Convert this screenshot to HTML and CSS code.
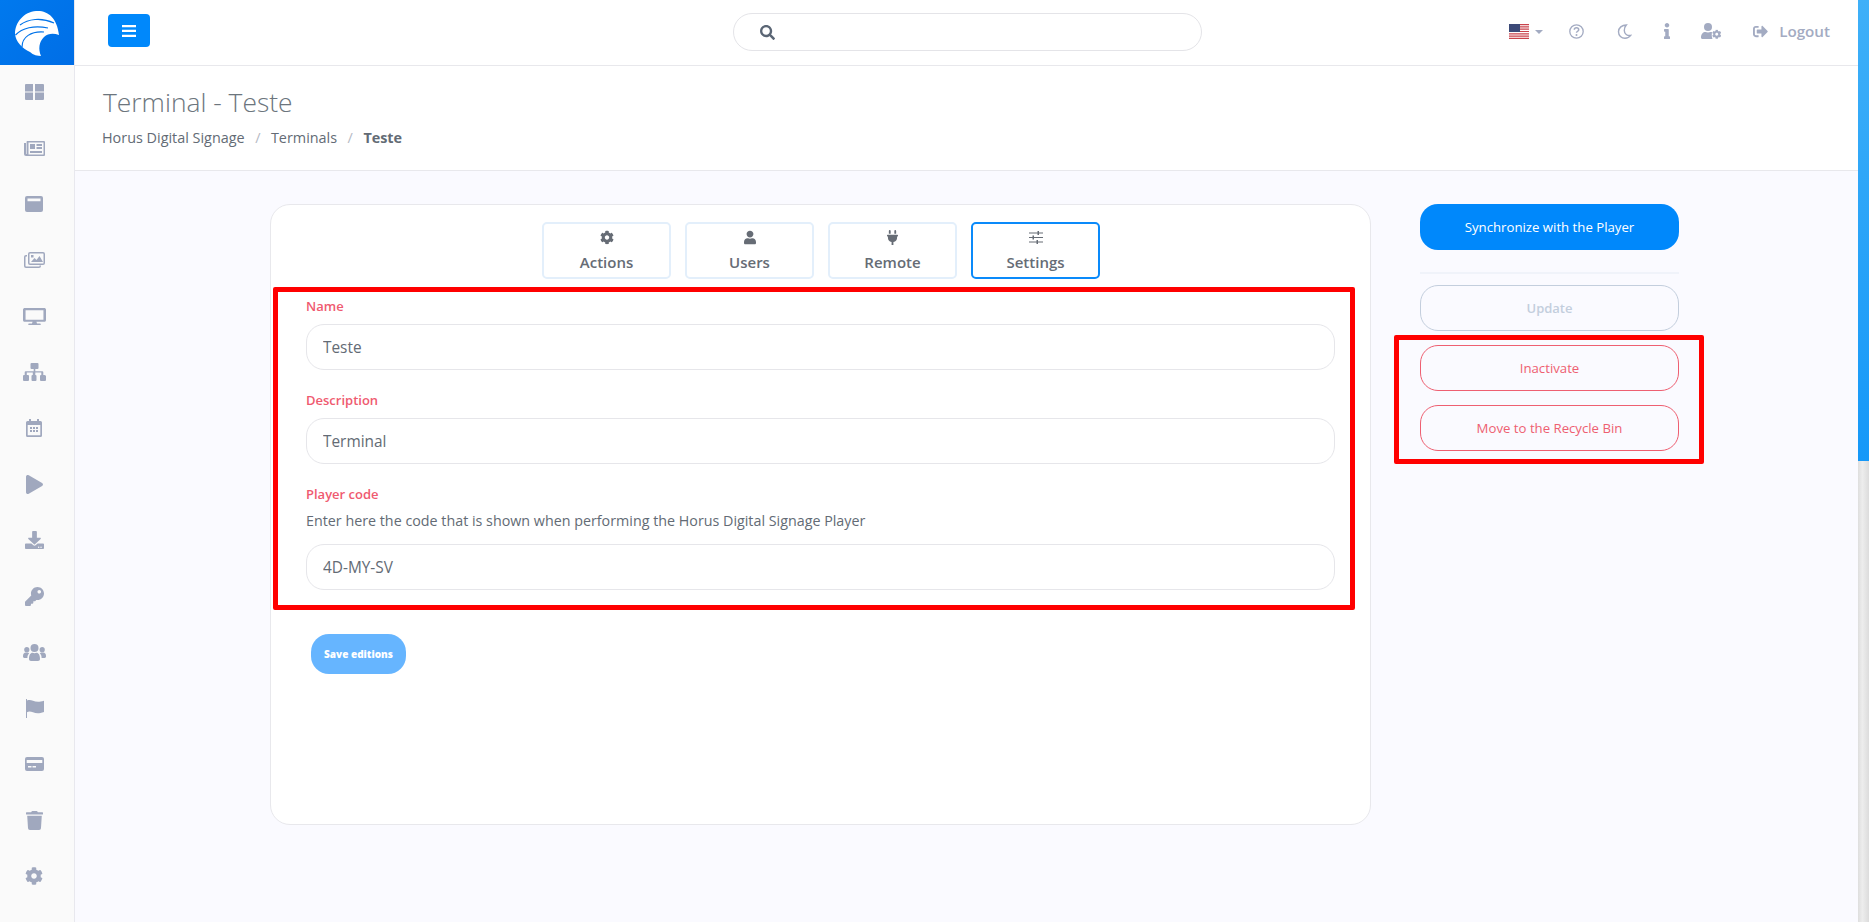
FILE: index.html
```html
<!DOCTYPE html>
<html lang="en">
<head>
    <meta charset="UTF-8">
    <meta name="viewport" content="width=device-width, initial-scale=1.0">
    <title>Terminal - Teste</title>
    <link rel="stylesheet" href="styles.css">
</head>
<body>
    <svg class="defs" width="0" height="0">
        <symbol id="cog" viewBox="0 0 512 512"><path d="M487.4 315.7l-42.6-24.6c4.3-23.2 4.3-47 0-70.2l42.6-24.6c4.9-2.8 7.1-8.6 5.5-14-11.1-35.6-30-67.8-54.7-94.6-3.8-4.1-10-5.1-14.8-2.3L380.8 110c-17.9-15.4-38.5-27.3-60.8-35.1V25.8c0-5.6-3.9-10.5-9.4-11.7-36.7-8.2-74.3-7.8-109.2 0-5.5 1.2-9.4 6.1-9.4 11.7V75c-22.2 7.9-42.8 19.8-60.8 35.1L88.7 85.5c-4.9-2.8-11-1.9-14.8 2.3-24.7 26.7-43.6 58.9-54.7 94.6-1.7 5.4.6 11.2 5.5 14L67.3 221c-4.3 23.2-4.3 47 0 70.2l-42.6 24.6c-4.9 2.8-7.1 8.6-5.5 14 11.1 35.6 30 67.8 54.7 94.6 3.8 4.1 10 5.1 14.8 2.3l42.6-24.6c17.9 15.4 38.5 27.3 60.8 35.1v49.2c0 5.6 3.9 10.5 9.4 11.7 36.7 8.2 74.3 7.8 109.2 0 5.5-1.2 9.4-6.1 9.4-11.7v-49.2c22.2-7.9 42.8-19.8 60.8-35.1l42.6 24.6c4.9 2.8 11 1.9 14.8-2.3 24.7-26.7 43.6-58.9 54.7-94.6 1.5-5.5-.7-11.3-5.6-14.1zM256 336c-44.1 0-80-35.9-80-80s35.9-80 80-80 80 35.9 80 80-35.9 80-80 80z"/></symbol>
        <symbol id="user" viewBox="0 0 448 512"><path d="M224 256c70.7 0 128-57.3 128-128S294.7 0 224 0 96 57.3 96 128s57.3 128 128 128zm89.6 32h-16.7c-22.2 10.2-46.9 16-72.9 16s-50.6-5.8-72.9-16h-16.7C60.2 288 0 348.2 0 422.4V464c0 26.5 21.5 48 48 48h352c26.5 0 48-21.5 48-48v-41.6c0-74.2-60.2-134.4-134.4-134.4z"/></symbol>
    </svg>

    <aside class="sidebar">
        <div class="logo">
            <svg width="46" height="46" viewBox="0 0 46 46">
                <path fill="#fff" d="M1 24C1 12 10 2 22 1c11-1 21 6 23 24-5-2-11-2-15 2-5 5-6 12-3 19-3 0-8-1-11-4C8 38 2 32 1 24z"/>
                <path fill="none" stroke="#0073e9" stroke-width="1.2" d="M6 15C14 9 27 7 40 13M1.500 25C8 18 20 15 34 18M8 37C8 27 17 21 30 22"/>
            </svg>
        </div>
        <nav class="side-nav">
            <a class="side-item"><svg width="19" height="16" viewBox="0 0 19 16"><path d="M0 1a1 1 0 0 1 1-1h7v7.400H0zM10 0h8a1 1 0 0 1 1 1v6.400h-9zM0 8.600h8V16H1a1 1 0 0 1-1-1zM10 8.600h9V15a1 1 0 0 1-1 1h-8z"/></svg></a>
            <a class="side-item"><svg width="21" height="15" viewBox="0 0 21 15"><path fill-rule="evenodd" d="M3 0h17a1 1 0 0 1 1 1v13a1 1 0 0 1-1 1H2a2 2 0 0 1-2-2V2h2v11h.6V1a1 1 0 0 1 .4-1zm1.500 1.500v12h15v-12z"/><path d="M6 3h5v5H6zM12.500 3H18v2h-5.500zM12.500 6H18v2h-5.500zM6 10h12v2H6z"/></svg></a>
            <a class="side-item"><svg width="18" height="16" viewBox="0 0 18 16"><path fill-rule="evenodd" d="M2 0h14a2 2 0 0 1 2 2v12a2 2 0 0 1-2 2H2a2 2 0 0 1-2-2V2a2 2 0 0 1 2-2zm.5 2.500v2.800h13V2.500z"/></svg></a>
            <a class="side-item"><svg width="21" height="16" viewBox="0 0 21 16"><path fill-rule="evenodd" d="M6 0h13a2 2 0 0 1 2 2v9a2 2 0 0 1-2 2H6a2 2 0 0 1-2-2V2a2 2 0 0 1 2-2zm0 1.500a.5.5 0 0 0-.5.5v9a.5.5 0 0 0 .5.5h13a.5.5 0 0 0 .5-.5V2a.5.5 0 0 0-.5-.5z"/><path d="M7 10l3.500-4 2 2 3-4L19 10zM7 3h2.500v2.500H7zM0 5a2 2 0 0 1 2-2h1v1.500H2a.5.5 0 0 0-.5.5v9c0 .3.2.5.5.5h13a.5.5 0 0 0 .5-.5v-.5H17v.5a2 2 0 0 1-2 2H2a2 2 0 0 1-2-2z"/></svg></a>
            <a class="side-item"><svg width="23" height="17" viewBox="0 0 576 512" preserveAspectRatio="none"><path d="M528 0H48C21.500 0 0 21.500 0 48v320c0 26.500 21.500 48 48 48h192l-16 48h-72c-13.300 0-24 10.700-24 24s10.700 24 24 24h272c13.300 0 24-10.700 24-24s-10.700-24-24-24h-72l-16-48h192c26.500 0 48-21.500 48-48V48c0-26.500-21.500-48-48-48zm-16 352H64V64h448v288z"/></svg></a>
            <a class="side-item"><svg width="23" height="18" viewBox="0 0 23 18"><path d="M8.500 0h6a1 1 0 0 1 1 1v4a1 1 0 0 1-1 1h-2.200v2.200h7a1 1 0 0 1 1 1V12h.7a2 2 0 0 1 2 1v4a1 1 0 0 1-1 1H18a1 1 0 0 1-1-1v-4a1 1 0 0 1 1-1h.3V9.600h-6V12h.2a1 1 0 0 1 1 1v4a1 1 0 0 1-1 1h-3a1 1 0 0 1-1-1v-4a1 1 0 0 1 1-1h.3V9.600h-6V12H5a1 1 0 0 1 1 1v4a1 1 0 0 1-1 1H1a1 1 0 0 1-1-1v-4a1 1 0 0 1 1-1h.7V9.200a1 1 0 0 1 1-1h8V6H8.500a1 1 0 0 1-1-1V1a1 1 0 0 1 1-1z"/></svg></a>
            <a class="side-item"><svg width="16" height="18" viewBox="0 0 16 18"><path fill-rule="evenodd" d="M3 0h2v2h6V0h2v2h1.500A1.500 1.500 0 0 1 16 3.500v13a1.500 1.500 0 0 1-1.500 1.500h-13A1.500 1.500 0 0 1 0 16.500v-13A1.500 1.500 0 0 1 1.500 2H3zM1.700 6v10a.3.3 0 0 0 .3.3h12a.3.3 0 0 0 .3-.3V6z"/><path d="M4 8h2v2H4zM7 8h2v2H7zM10 8h2v2h-2zM4 11h2v2H4zM7 11h2v2H7zM10 11h2v2h-2z"/></svg></a>
            <a class="side-item"><svg width="17" height="19" viewBox="0 0 448 512" preserveAspectRatio="none"><path d="M424.400 214.700L72.400 6.600C43.800-10.300 0 6.100 0 47.900V464c0 37.500 40.700 60.100 72.400 41.300l352-208c31.400-18.500 31.500-64.100 0-82.600z"/></svg></a>
            <a class="side-item"><svg width="19" height="18" viewBox="0 0 512 512" preserveAspectRatio="none"><path d="M216 0h80c13.300 0 24 10.700 24 24v168h87.700c17.800 0 26.700 21.500 14.100 34.100L269.700 378.300c-7.500 7.500-19.800 7.500-27.300 0L90.100 226.100c-12.600-12.600-3.700-34.100 14.100-34.100H192V24c0-13.300 10.700-24 24-24zm296 376v112c0 13.300-10.700 24-24 24H24c-13.300 0-24-10.700-24-24V376c0-13.300 10.700-24 24-24h146.700l49 49c20.100 20.100 52.500 20.100 72.600 0l49-49H488c13.300 0 24 10.700 24 24zm-124 88c0-11-9-20-20-20s-20 9-20 20 9 20 20 20 20-9 20-20zm64 0c0-11-9-20-20-20s-20 9-20 20 9 20 20 20 20-9 20-20z"/></svg></a>
            <a class="side-item"><svg width="19" height="19" viewBox="0 0 512 512"><path d="M512 176.001C512 273.203 433.202 352 336 352c-11.220 0-22.190-1.062-32.827-3.069l-24.012 27.014A23.999 23.999 0 0 1 261.223 384H224v40c0 13.255-10.745 24-24 24h-40v40c0 13.255-10.745 24-24 24H24c-13.255 0-24-10.745-24-24v-78.059c0-6.365 2.529-12.470 7.029-16.971l161.802-161.802C163.108 213.814 160 195.271 160 176 160 78.798 238.797.001 335.999 0 433.488-.001 512 78.511 512 176.001zM336 128c0 26.510 21.490 48 48 48s48-21.490 48-48-21.490-48-48-48-48 21.490-48 48z"/></svg></a>
            <a class="side-item"><svg width="23" height="17" viewBox="0 0 23 17"><circle cx="11.500" cy="4" r="4"/><path d="M6 15c0-4 1.500-6.200 3.500-6.200 1.300.6 2.700.6 4 0 2 0 3.500 2.200 3.500 6.200 0 1.200-.8 2-2 2H8c-1.200 0-2-.8-2-2z"/><circle cx="3.800" cy="5.700" r="2.600"/><circle cx="19.200" cy="5.700" r="2.600"/><path d="M0 12c0-2 1-3.500 3-3.500h1.500c.6 0 1.200.3 1.700.7C5 10.200 4.400 12 4.400 14H1.300C.5 14 0 13.400 0 12.600zM23 12c0-2-1-3.500-3-3.500h-1.500c-.6 0-1.200.3-1.700.7 1.200 1 1.800 2.800 1.800 4.800h3.100c.8 0 1.300-.6 1.300-1.400z"/></svg></a>
            <a class="side-item"><svg width="19" height="19" viewBox="0 0 19 19"><path d="M1 0h1v1.500C4 .8 6 1 8 1.800c3 1.200 6 1.500 11 0V13c-5 1.700-8 1.400-11 .3-2.500-.9-4.500-1-6 0V19H1z"/></svg></a>
            <a class="side-item"><svg width="19" height="14" viewBox="0 0 19 14"><path fill-rule="evenodd" d="M2 0h15a2 2 0 0 1 2 2v10a2 2 0 0 1-2 2H2a2 2 0 0 1-2-2V2a2 2 0 0 1 2-2zm-.3 3v3h15.600V3zM3 9v1.500h3.500V9zm4.500 0v1.500h3.500V9z"/></svg></a>
            <a class="side-item"><svg width="17" height="19" viewBox="0 0 448 512" preserveAspectRatio="none"><path d="M432 32H312l-9.400-18.700A24 24 0 0 0 281.100 0H166.800a23.720 23.720 0 0 0-21.400 13.300L136 32H16A16 16 0 0 0 0 48v32a16 16 0 0 0 16 16h416a16 16 0 0 0 16-16V48a16 16 0 0 0-16-16zM53.200 467a48 48 0 0 0 47.900 45h245.800a48 48 0 0 0 47.900-45L416 128H32z"/></svg></a>
            <a class="side-item"><svg width="18" height="18"><use href="#cog"/></svg></a>
        </nav>
    </aside>

    <div class="main">
        <header class="topbar">
            <button class="menu-btn">
                <svg width="14" height="12" viewBox="0 0 14 12"><path fill="#fff" d="M0 0h14v2.300H0zM0 4.800h14v2.300H0zM0 9.700h14V12H0z"/></svg>
            </button>
            <div class="search">
                <svg width="15" height="15" viewBox="0 0 512 512"><path fill="#5b6675" d="M505 442.700L405.300 343c-4.500-4.500-10.600-7-17-7H372c27.600-35.300 44-79.700 44-128C416 93.100 322.900 0 208 0S0 93.100 0 208s93.100 208 208 208c48.300 0 92.700-16.400 128-44v16.300c0 6.400 2.500 12.500 7 17l99.700 99.700c9.400 9.400 24.600 9.400 33.900 0l28.300-28.300c9.400-9.400 9.400-24.600.1-34zM208 336c-70.700 0-128-57.200-128-128 0-70.700 57.200-128 128-128 70.700 0 128 57.200 128 128 0 70.700-57.200 128-128 128z"/></svg>
            </div>
            <div class="top-actions">
                <svg class="flag" width="20" height="15" viewBox="0 0 20 15">
                    <rect width="20" height="15" fill="#fff"/>
                    <path fill="#c9434c" d="M0 0h20v1.200H0zM0 2.300h20v1.200H0zM0 4.600h20v1.200H0zM0 6.900h20v1.200H0zM0 9.200h20v1.200H0zM0 11.500h20v1.200H0zM0 13.800h20V15H0z"/>
                    <rect width="11" height="8" fill="#3c4a78"/>
                </svg>
                <span class="caret"></span>
                <svg class="help" width="15" height="15" viewBox="0 0 15 15"><circle cx="7.500" cy="7.500" r="6.700" fill="none" stroke="#a3abc2" stroke-width="1.300"/><path fill="none" stroke="#a3abc2" stroke-width="1.500" d="M5.300 5.800c0-1.300 1-2 2.200-2s2.200.7 2.200 1.900c0 1.600-2.200 1.500-2.200 3.100"/><circle cx="7.500" cy="10.900" r="1" fill="#a3abc2"/></svg>
                <svg class="moon" width="15" height="15" viewBox="0 0 15 15"><path fill="none" stroke="#a3abc2" stroke-width="1.400" d="M9.300 1C5 1 1.500 3.800 1.500 7.700s3 6.500 6.500 6.500c2.400 0 4.400-1 5.700-2.800-3.500.6-6.400-1.500-6.400-4.800 0-2.300.8-4.300 2-5.600z"/></svg>
                <svg class="info" width="6" height="16" viewBox="0 0 192 512" preserveAspectRatio="none"><path fill="#a3abc2" d="M20 424.229h20V279.771H20c-11.046 0-20-8.954-20-20V212c0-11.046 8.954-20 20-20h112c11.046 0 20 8.954 20 20v212.229h20c11.046 0 20 8.954 20 20V492c0 11.046-8.954 20-20 20H20c-11.046 0-20-8.954-20-20v-47.771c0-11.046 8.954-20 20-20zM96 0C56.235 0 24 32.235 24 72s32.235 72 72 72 72-32.235 72-72S135.764 0 96 0z"/></svg>
                <svg class="user-cog" width="20" height="16" viewBox="0 0 20 16"><circle cx="7" cy="4" r="4" fill="#a3abc2"/><path fill="#a3abc2" d="M0 14.500C0 11 2 9 4.500 9c1.500.6 3.500.6 5 0 .6 0 1.100.1 1.600.3-.5 1.300-.6 4.200.4 6.700H1.500C.6 16 0 15.400 0 14.500z"/><use href="#cog" x="11" y="6.500" width="9.500" height="9.500" fill="#a3abc2"/></svg>
                <svg class="logout-icon" width="15" height="15" viewBox="0 0 512 512"><path fill="#a3abc2" d="M497 273L329 441c-15 15-41 4.500-41-17v-96H152c-13.300 0-24-10.700-24-24v-96c0-13.300 10.700-24 24-24h136V88c0-21.400 25.900-32 41-17l168 168c9.300 9.400 9.300 24.600 0 34zM192 436v-40c0-6.600-5.400-12-12-12H96c-17.700 0-32-14.300-32-32V160c0-17.700 14.300-32 32-32h84c6.600 0 12-5.400 12-12V76c0-6.600-5.400-12-12-12H96c-53 0-96 43-96 96v192c0 53 43 96 96 96h84c6.600 0 12-5.400 12-12z"/></svg>
                <span class="logout">Logout</span>
            </div>
        </header>

        <section class="page-head">
            <h1>Terminal - Teste</h1>
            <ol class="crumbs">
                <li>Horus Digital Signage</li>
                <li class="sep">/</li>
                <li>Terminals</li>
                <li class="sep">/</li>
                <li class="current">Teste</li>
            </ol>
        </section>

        <div class="content">
            <div class="card">
                <div class="tabs">
                    <a class="tab">
                        <svg width="14" height="14"><use href="#cog"/></svg>
                        <span>Actions</span>
                    </a>
                    <a class="tab">
                        <svg width="12" height="14"><use href="#user"/></svg>
                        <span>Users</span>
                    </a>
                    <a class="tab">
                        <svg width="11" height="15" viewBox="0 0 384 512" preserveAspectRatio="none"><path d="M320 32a32 32 0 0 0-64 0v96h64zm48 128H16a16 16 0 0 0-16 16v32a16 16 0 0 0 16 16h16v32a160.070 160.070 0 0 0 128 156.800V512h64v-99.200A160.070 160.070 0 0 0 352 256v-32h16a16 16 0 0 0 16-16v-32a16 16 0 0 0-16-16zM128 32a32 32 0 0 0-64 0v96h64z"/></svg>
                        <span>Remote</span>
                    </a>
                    <a class="tab active">
                        <svg width="14" height="13" viewBox="0 0 14 13"><path d="M0 1.500h14v1H0zM0 6h14v1H0zM0 10.500h14v1H0zM8.500 0H10v4H8.500zM3.500 4.500H5v4H3.500zM7.500 9H9v4H7.500z"/></svg>
                        <span>Settings</span>
                    </a>
                </div>

                <form class="form-box">
                    <label class="field-label">Name</label>
                    <input class="field" type="text" value="Teste">
                    <label class="field-label">Description</label>
                    <input class="field" type="text" value="Terminal">
                    <label class="field-label">Player code</label>
                    <p class="field-help">Enter here the code that is shown when performing the Horus Digital Signage Player</p>
                    <input class="field" type="text" value="4D-MY-SV">
                </form>

                <button class="save-btn">Save editions</button>
            </div>

            <div class="side-col">
                <button class="pill pill-primary">Synchronize with the Player</button>
                <hr class="side-rule">
                <button class="pill pill-muted">Update</button>
                <div class="danger-box">
                    <button class="pill pill-danger">Inactivate</button>
                    <button class="pill pill-danger">Move to the Recycle Bin</button>
                </div>
            </div>
        </div>
    </div>

    <div class="scrollbar"><div class="scroll-thumb"></div></div>
</body>
</html>
```

FILE: styles.css
```css
* {
    margin: 0;
    padding: 0;
    box-sizing: border-box;
}

body {
    font-family: 'Open Sans', sans-serif;
    background: #fafaff;
    color: #636b75;
    height: 922px;
    overflow: hidden;
    display: flex;
}

.defs {
    position: absolute;
}

/* sidebar */
.sidebar {
    width: 75px;
    flex: none;
    background: #fafafa;
    border-right: 1px solid #e8e8ee;
}

.logo {
    height: 65px;
    background: linear-gradient(135deg, #0079ee 0%, #006ee6 100%);
    display: flex;
    align-items: center;
    justify-content: center;
    padding-right: 1px;
}

.side-nav {
    margin-top: -1px;
}

.side-item {
    height: 56px;
    display: flex;
    align-items: center;
    justify-content: center;
    fill: #a0a8be;
    padding-right: 6px;
}

/* top */
.main {
    flex: 1;
    min-width: 0;
    display: flex;
    flex-direction: column;
}

.topbar {
    height: 66px;
    flex: none;
    background: #fff;
    border-bottom: 1px solid #e8e8ec;
    display: flex;
    align-items: flex-start;
    position: relative;
}

.menu-btn {
    width: 42px;
    height: 33px;
    margin: 14px 0 0 33px;
    border: none;
    border-radius: 4px;
    background: #0088fb;
    display: flex;
    align-items: center;
    justify-content: center;
}

.search {
    width: 469px;
    height: 38px;
    margin: 13px 0 0 583px;
    border: 1px solid #e4e4e8;
    border-radius: 19px;
    display: flex;
    align-items: center;
    padding-left: 26px;
}

.top-actions {
    margin-left: auto;
    padding-right: 28px;
    height: 62px;
    display: flex;
    align-items: center;
}

.caret {
    width: 0;
    height: 0;
    margin: 2px 0 0 6px;
    border-left: 4px solid transparent;
    border-right: 4px solid transparent;
    border-top: 4px solid #a3abc2;
}

.help { margin-left: 26px; }
.moon { margin-left: 33px; }
.info { margin-left: 32px; }
.user-cog { margin-left: 31px; }
.logout-icon { margin-left: 32px; }

.logout {
    margin-left: 11px;
    font-size: 15.2px;
    font-weight: 600;
    color: #a3abc2;
}

/* page head */
.page-head {
    height: 105px;
    flex: none;
    background: #fff;
    border-bottom: 1px solid #e8e8ec;
    padding: 17px 0 0 28px;
}

h1 {
    font-size: 26.4px;
    font-weight: 300;
    line-height: 38px;
    color: #6c757d;
}

.crumbs {
    list-style: none;
    display: flex;
    margin: 7px 0 0 -1px;
    font-size: 14.4px;
    line-height: 20px;
}

.sep {
    color: #b5bac4;
    margin: 0 10.5px;
}

.current {
    font-weight: 700;
}

/* card */
.content {
    flex: 1;
    display: flex;
    align-items: flex-start;
    padding: 33px 0 0 195px;
}

.card {
    width: 1101px;
    height: 621px;
    flex: none;
    background: #fff;
    border: 1px solid #e8e8ec;
    border-radius: 20px;
}

.tabs {
    display: flex;
    gap: 14px;
    margin: 17px 0 0 271px;
}

.tab {
    width: 129px;
    height: 57px;
    border: 2px solid #e3effb;
    border-radius: 5px;
    display: flex;
    flex-direction: column;
    align-items: center;
    fill: #666c75;
    color: #666c75;
    padding-top: 6px;
}

.tab span {
    margin-top: 7px;
    font-size: 15px;
    font-weight: 600;
    line-height: 20px;
}

.tab svg {
    height: 15px;
}

.tab.active {
    border-color: #0a8afa;
}

.form-box {
    width: 1082px;
    margin: 8px 0 0 2px;
    border: 5px solid #f00;
    border-radius: 2px;
    padding: 4px 15px 15px 28px;
}

.field-label {
    display: block;
    font-size: 13px;
    font-weight: 600;
    line-height: 20px;
    color: #ef5a70;
    margin-bottom: 8px;
}

.field {
    display: block;
    width: 100%;
    height: 46px;
    margin-bottom: 20px;
    padding: 0 16px;
    border: 1px solid #e6e6ea;
    border-radius: 18px;
    background: #fff;
    font-family: 'Open Sans', sans-serif;
    font-size: 15.4px;
    color: #636b75;
}

.field:last-child {
    margin-bottom: 0;
}

.field-help {
    font-size: 14.3px;
    line-height: 20px;
    margin-top: -1px;
    margin-bottom: 13px;
}

.save-btn {
    display: block;
    width: 95px;
    height: 40px;
    margin: 24px 0 0 40px;
    border: none;
    border-radius: 18px;
    background: #66b5ff;
    color: #fff;
    font-family: 'Open Sans', sans-serif;
    font-size: 10px;
    font-weight: 800;
}

/* right column */
.side-col {
    width: 259px;
    margin-left: 49px;
    flex: none;
}

.pill {
    display: block;
    width: 100%;
    height: 46px;
    border-radius: 18px;
    background: transparent;
    font-family: 'Open Sans', sans-serif;
    font-size: 13px;
}

.pill-primary {
    border: none;
    background: #0088fb;
    color: #fff;
    font-size: 13.2px;
    font-weight: 500;
}

.side-rule {
    border: none;
    height: 2px;
    background: #f0f3fa;
    margin: 22px 0 11px;
}

.pill-muted {
    border: 1px solid #c3cedd;
    color: #c3cedd;
    font-weight: 600;
}

.pill-danger {
    border: 1px solid #ee5f71;
    color: #ee5f71;
    font-size: 13.2px;
}

.danger-box {
    width: 310px;
    margin: 4px 0 0 -26px;
    border: 5px solid #f00;
    border-radius: 2px;
    padding: 5px 20px 8px 21px;
    display: flex;
    flex-direction: column;
    gap: 14px;
}

/* page scrollbar */
.scrollbar {
    width: 11px;
    flex: none;
    background: linear-gradient(90deg, #dedede, #ededed 40%, #dcdcdc);
}

.scroll-thumb {
    height: 461px;
    background: linear-gradient(180deg, #3fb0f8 0%, #1598f8 100%);
}
```
